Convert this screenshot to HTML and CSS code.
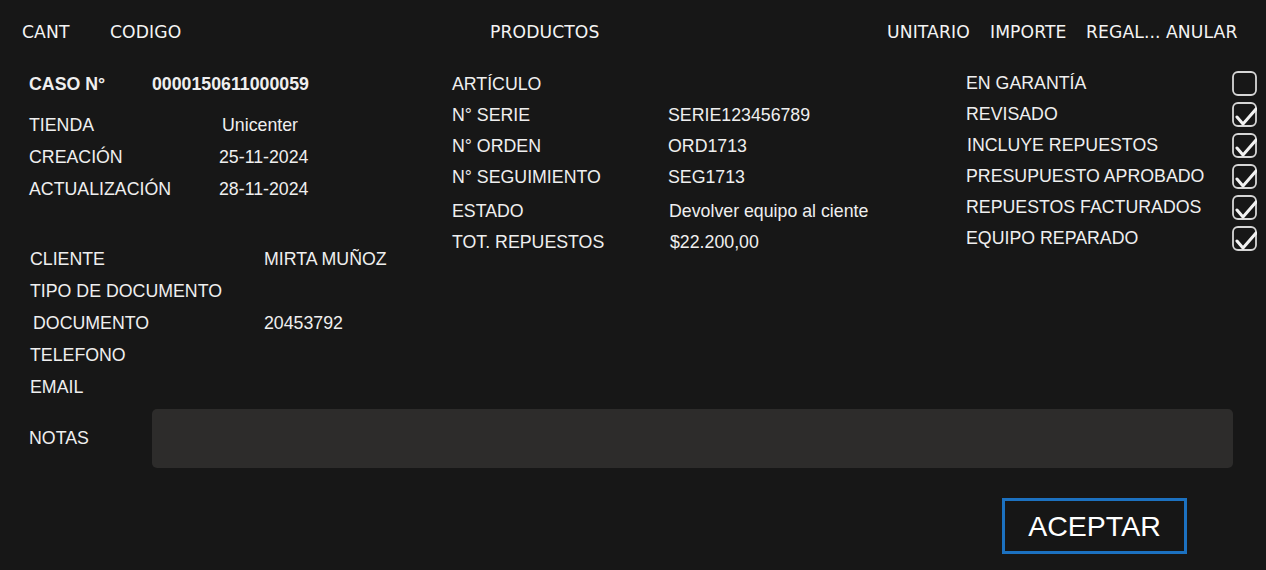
FILE: index.html
```html
<!DOCTYPE html>
<html lang="es">
<head>
<meta charset="utf-8">
<title>Caso</title>
<link rel="stylesheet" href="styles.css">
</head>
<body>
<div class="page">
  <div class="header">
    <span>CANT</span>
    <span>CODIGO</span>
    <span>PRODUCTOS</span>
    <span>UNITARIO</span>
    <span>IMPORTE</span>
    <span>REGAL...</span>
    <span>ANULAR</span>
  </div>

  <div class="main">
    <div class="col-left">
      <div class="group group-case">
        <div class="row row-case"><span class="lbl-case">CASO N°</span><span class="val-case">0000150611000059</span></div>
        <div class="row row-store"><span class="lbl-case">TIENDA</span><span class="val-store">Unicenter</span></div>
        <div class="row"><span class="lbl-case">CREACIÓN</span><span class="val-date">25-11-2024</span></div>
        <div class="row"><span class="lbl-case">ACTUALIZACIÓN</span><span class="val-date">28-11-2024</span></div>
      </div>
      <div class="group group-client">
        <div class="row"><span class="lbl-client">CLIENTE</span><span>MIRTA MUÑOZ</span></div>
        <div class="row"><span class="lbl-client">TIPO DE DOCUMENTO</span><span></span></div>
        <div class="row"><span class="lbl-client lbl-indent">DOCUMENTO</span><span>20453792</span></div>
        <div class="row"><span class="lbl-client">TELEFONO</span><span></span></div>
        <div class="row"><span class="lbl-client">EMAIL</span><span></span></div>
      </div>
    </div>

    <div class="col-mid">
      <div class="mrow"><span class="lbl-mid">ARTÍCULO</span><span></span></div>
      <div class="mrow"><span class="lbl-mid">N° SERIE</span><span>SERIE123456789</span></div>
      <div class="mrow"><span class="lbl-mid">N° ORDEN</span><span>ORD1713</span></div>
      <div class="mrow"><span class="lbl-mid">N° SEGUIMIENTO</span><span>SEG1713</span></div>
      <div class="mrow mrow-state"><span class="lbl-mid">ESTADO</span><span class="val-shift">Devolver equipo al ciente</span></div>
      <div class="mrow"><span class="lbl-mid">TOT. REPUESTOS</span><span class="val-shift2">$22.200,00</span></div>
    </div>

    <div class="col-right">
      <div class="crow"><span>EN GARANTÍA</span>
        <svg class="cb" viewBox="0 0 25 25"><rect x="1" y="1" width="23" height="23" rx="5"/></svg></div>
      <div class="crow"><span>REVISADO</span>
        <svg class="cb" viewBox="0 0 25 25"><rect x="1" y="1" width="23" height="23" rx="5"/><path d="M5 15 L11 22 L24 7"/></svg></div>
      <div class="crow"><span class="nudge">INCLUYE REPUESTOS</span>
        <svg class="cb" viewBox="0 0 25 25"><rect x="1" y="1" width="23" height="23" rx="5"/><path d="M5 15 L11 22 L24 7"/></svg></div>
      <div class="crow"><span>PRESUPUESTO APROBADO</span>
        <svg class="cb" viewBox="0 0 25 25"><rect x="1" y="1" width="23" height="23" rx="5"/><path d="M5 15 L11 22 L24 7"/></svg></div>
      <div class="crow"><span>REPUESTOS FACTURADOS</span>
        <svg class="cb" viewBox="0 0 25 25"><rect x="1" y="1" width="23" height="23" rx="5"/><path d="M5 15 L11 22 L24 7"/></svg></div>
      <div class="crow"><span>EQUIPO REPARADO</span>
        <svg class="cb" viewBox="0 0 25 25"><rect x="1" y="1" width="23" height="23" rx="5"/><path d="M5 15 L11 22 L24 7"/></svg></div>
    </div>
  </div>

  <div class="notes">
    <span class="notes-lbl">NOTAS</span>
    <textarea class="notes-box"></textarea>
  </div>

  <div class="actions">
    <button class="btn">ACEPTAR</button>
  </div>
</div>
</body>
</html>
```

FILE: styles.css
```css
* { box-sizing: border-box; }

html, body {
  margin: 0;
  padding: 0;
  background: #171717;
}

body {
  width: 1266px;
  height: 570px;
  overflow: hidden;
  color: #efefef;
  font-family: "Liberation Sans", Arial, sans-serif;
  font-size: 17.75px;
}

.header {
  display: grid;
  grid-template-columns: 88px 380px 397px 103px 96px 80px auto;
  align-items: center;
  height: 62px;
  padding-left: 22px;
  padding-top: 2px;
  font-family: "DejaVu Sans", sans-serif;
  font-size: 17.2px;
  color: #f4f4f4;
  letter-spacing: 0.1px;
}

.main {
  display: grid;
  grid-template-columns: 423px 514px 291px;
  padding: 6px 9px 0 29px;
}

.row {
  display: flex;
  height: 32px;
  align-items: center;
}

.group-case .row-case {
  font-weight: bold;
  margin-bottom: 9px;
}

.lbl-case { width: 123px; flex: none; white-space: nowrap; }
.row-store .val-store { padding-left: 70px; }
.val-date { padding-left: 67px; }

.group-client {
  margin-top: 38px;
  padding-left: 1px;
}

.lbl-client { width: 234px; flex: none; }
.lbl-indent { padding-left: 3px; }

.col-mid { padding-top: 0.5px; }

.mrow {
  display: flex;
  height: 31px;
  align-items: center;
}

.mrow-state { margin-top: 3px; }

.lbl-mid { width: 216px; flex: none; }
.val-shift { padding-left: 1px; }
.val-shift2 { padding-left: 2px; }

.crow {
  display: flex;
  justify-content: space-between;
  align-items: center;
  height: 31px;
}

.nudge { padding-left: 1px; }

.cb {
  width: 25px;
  height: 25px;
  flex: none;
  fill: none;
}

.cb rect {
  stroke: #d6d6d6;
  stroke-width: 1.8;
}

.cb path {
  stroke: #f2f2f2;
  stroke-width: 3;
  stroke-linecap: round;
  stroke-linejoin: round;
}

.notes {
  display: flex;
  align-items: center;
  margin-top: 6px;
  padding: 0 33px 0 29px;
}

.notes-lbl { width: 123px; flex: none; }

.notes-box {
  flex: 1;
  height: 59px;
  background: #2d2c2b;
  border: none;
  border-radius: 5px;
  resize: none;
  outline: none;
  color: #efefef;
}

.actions {
  display: flex;
  justify-content: flex-end;
  padding-right: 79px;
  margin-top: 30px;
}

.btn {
  width: 185px;
  height: 56px;
  background: #161616;
  border: 3px solid #1c71c0;
  color: #ffffff;
  font-family: "Liberation Sans", Arial, sans-serif;
  font-size: 28.5px;
  padding: 0;
}
```
